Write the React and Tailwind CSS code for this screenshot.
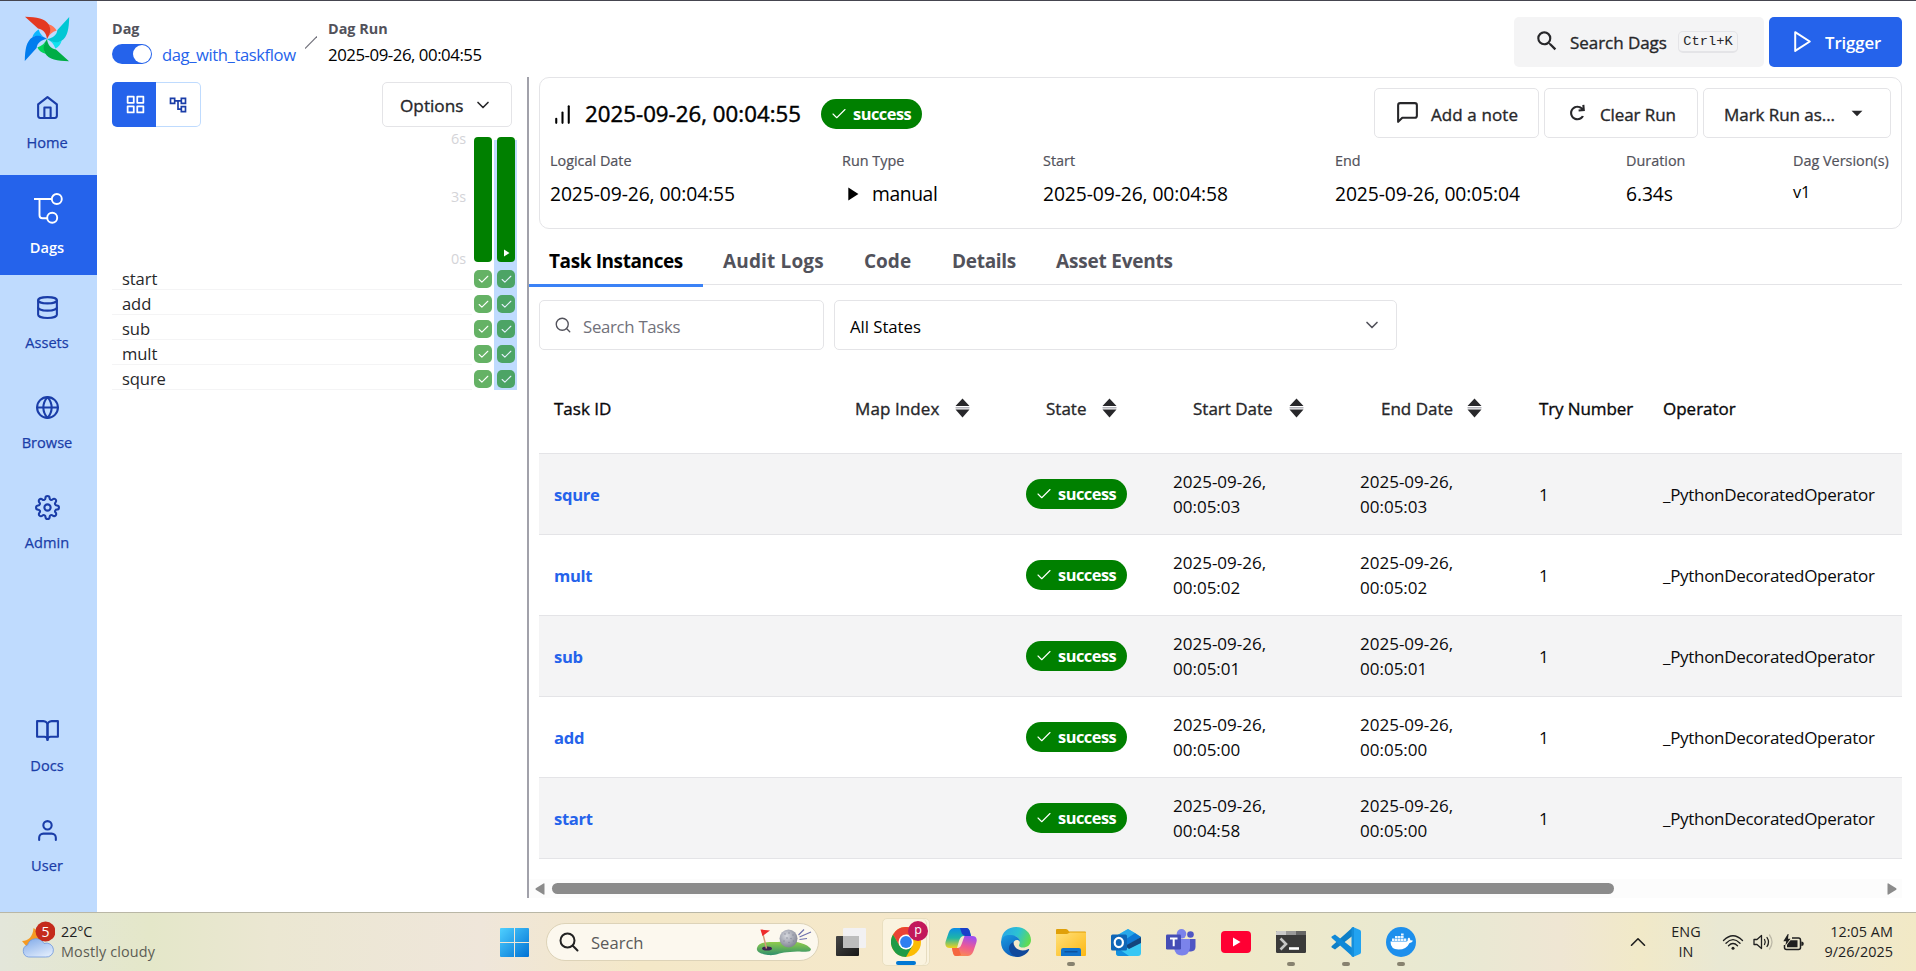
import React from "react";
import {
  FiHome,
  FiDatabase,
  FiGlobe,
  FiSettings,
  FiBookOpen,
  FiUser,
  FiGrid,
  FiChevronDown,
  FiChevronUp,
  FiBarChart,
  FiMessageSquare,
  FiPlay,
  FiSearch,
  FiCheck,
} from "react-icons/fi";
import { MdOutlineAccountTree, MdSearch, MdPlayArrow, MdArrowDropDown } from "react-icons/md";
import { CgRedo } from "react-icons/cg";

const PinwheelLogo = () => (
  <svg width="46" height="46" viewBox="-23 -23 46 46">
    {[
      ["#e43921", "#ff7557", 0],
      ["#00c7d4", "#11e1ee", 90],
      ["#00ad46", "#04d659", 180],
      ["#017cee", "#0cb6ff", 270],
    ].map(([dark, light, deg]) => (
      <g key={deg} transform={`rotate(${deg})`}>
        <path d="M0 0C2.6-4 4.2-9 1.5-14.8C5.5-13.5 8-11.5 9.6-8.4C5-7 2-4 0 0Z" fill={light} />
        <path d="M0 0C-.6-5.5-3.5-9.6-9-10.4L-22-22.2C-10-22-2-20.5 1.8-14.5C5-8.6 2.4-3.8 0 0Z" fill={dark} />
      </g>
    ))}
  </svg>
);

const DagIcon = () => (
  <svg width="32" height="32" viewBox="0 0 32 32" fill="none" stroke="currentColor" strokeWidth="1.9">
    <path d="M3 7H20M8.500 7V23.200a3 3 0 0 0 3 3H16" strokeLinejoin="round" />
    <circle cx="25.800" cy="7" r="5" />
    <circle cx="21.200" cy="25.800" r="5" />
  </svg>
);

const NavItem = ({ icon, label, active }) => (
  <div
    className={
      active
        ? "flex h-[100px] w-full flex-col items-center bg-[#2563eb] pr-[3px] text-[14.6px] font-semibold text-white"
        : "flex h-[100px] w-full flex-col items-center text-[14.6px] font-medium text-[#1a3da8] [-webkit-text-stroke:0.25px]"
    }
  >
    <div className={active ? "mt-[17px] flex h-8 items-center" : "mt-[20px] flex h-[25px] items-center"}>{icon}</div>
    <div className={active ? "mt-[13px] leading-5" : "mt-[12px] leading-5"}>{label}</div>
  </div>
);

const Sidebar = () => (
  <nav className="flex w-[97px] shrink-0 flex-col items-center bg-[#bfdbfe] pr-[3px]">
    <div className="flex h-[74px] shrink-0 items-center pt-0.5">
      <PinwheelLogo />
    </div>
    <NavItem icon={<FiHome size={25} />} label="Home" />
    <div className="-mr-[3px] w-[97px]">
      <NavItem icon={<DagIcon />} label="Dags" active />
    </div>
    <NavItem icon={<FiDatabase size={25} />} label="Assets" />
    <NavItem icon={<FiGlobe size={25} />} label="Browse" />
    <NavItem icon={<FiSettings size={25} />} label="Admin" />
    <div className="h-[123px] shrink-0" />
    <NavItem icon={<FiBookOpen size={25} />} label="Docs" />
    <NavItem icon={<FiUser size={25} />} label="User" />
  </nav>
);

const Header = () => (
  <header className="flex h-[76px] shrink-0 justify-between pl-[15px] pr-[14px]">
    <div className="flex pt-[18px]">
      <div className="w-[193px]">
        <div className="text-[14.4px] font-bold leading-5 text-[#52525b]">Dag</div>
        <div className="mt-[3px] flex h-6 items-center">
          <div className="flex h-5 w-10 items-center justify-end rounded-full bg-[#2563eb] p-px">
            <div className="size-[18px] rounded-full bg-white" />
          </div>
          <span className="ml-[10px] whitespace-nowrap pt-0.5 text-[16.6px] tracking-[-0.4px] text-[#2563eb]">dag_with_taskflow</span>
        </div>
      </div>
      <svg className="mt-[17px]" width="12" height="13" viewBox="0 0 12 13" stroke="#71717a" strokeWidth="1.1">
        <path d="M0 12.500L12 .5" />
      </svg>
      <div className="ml-[11px]">
        <div className="text-[14.4px] font-bold leading-5 text-[#52525b]">Dag Run</div>
        <div className="mt-[3px] h-6 whitespace-nowrap pt-px text-[16.8px] leading-6 tracking-[-0.45px] text-black">2025-09-26, 00:04:55</div>
      </div>
    </div>
    <div className="flex gap-[5px] pt-4">
      <button className="flex h-[50px] w-[250px] items-center rounded-[5px] bg-[#f4f4f5] pl-[20px] text-[#27272a]">
        <MdSearch size={26} className="-mt-0.5" />
        <span className="ml-[10px] w-[108px] whitespace-nowrap pt-px text-left text-[17px] font-medium tracking-[-0.05px] [-webkit-text-stroke:0.35px]">Search Dags</span>
        <kbd className="flex h-[22px] w-[60px] items-center justify-center rounded-[5px] border border-b-2 border-[#e4e4e7] pt-0.5 font-['Liberation_Mono',monospace] text-[13.7px]">
          Ctrl+K
        </kbd>
      </button>
      <button className="flex h-[50px] w-[133px] items-center rounded-[5px] bg-[#2563eb] pl-[21px] text-white">
        <FiPlay size={25} strokeWidth={1.9} className="-mt-0.5" />
        <span className="ml-[10px] pt-0.5 text-[16.8px] font-semibold tracking-[-0.1px]">Trigger</span>
      </button>
    </div>
  </header>
);

const tasks = ["start", "add", "sub", "mult", "squre"];

const CheckSquare = () => (
  <div className="flex size-[18px] items-center justify-center rounded-[5px] bg-[#008000] text-white opacity-60">
    <FiCheck size={13} strokeWidth={2} />
  </div>
);

const GridPanel = () => (
  <section className="flex w-[430px] shrink-0 flex-col pl-[15px]">
    <div className="flex h-[55px] w-[400px] justify-between pt-[5px]">
      <div className="flex h-[45px] w-[89px]">
        <div className="flex w-[44px] items-center justify-center rounded-l-[5px] bg-[#2563eb] pl-0.5 text-white">
          <FiGrid size={21} />
        </div>
        <div className="flex flex-1 items-center justify-center rounded-r-[5px] border border-l-0 border-[#bfdbfe] text-[#1a3da8]">
          <MdOutlineAccountTree size={20} />
        </div>
      </div>
      <button className="flex h-[45px] w-[130px] items-center rounded-[5px] border border-[#e4e4e7] pl-[17px] text-[#27272a]">
        <span className="w-[73px] pt-0.5 text-left text-[17.2px] font-medium [-webkit-text-stroke:0.35px]">Options</span>
        <FiChevronDown size={20} />
      </button>
    </div>
    <div className="flex">
      <div className="w-[360px]">
        <div className="flex h-[133px] flex-col items-end justify-between pr-[6px] text-[14.4px] leading-5 text-[#d4d4d8]">
          <span className="-mt-[3px]">6s</span>
          <span className="pb-[5px]">3s</span>
          <span className="-mb-[4px]">0s</span>
        </div>
        {tasks.map((t) => (
          <div key={t} className="h-[25px] border-b border-[#f4f4f5] pl-[10px] text-[16.6px] leading-[27px] tracking-[-0.1px] text-[#27272a]">
            {t}
          </div>
        ))}
      </div>
      <div className="flex w-[22px] flex-col items-center pt-[5px]">
        <div className="h-[125px] w-[18px] rounded-[4px] bg-[#008000]" />
        <div className="mt-2 flex flex-col gap-[7px]">
          {tasks.map((t) => (
            <CheckSquare key={t} />
          ))}
        </div>
      </div>
      <div className="mt-2 flex h-[250px] w-[23px] flex-col items-start bg-[#bfdbfe] pl-[3px]">
        <div className="-mt-[3px] flex h-[125px] w-[18px] shrink-0 items-end justify-center rounded-[4px] bg-[#008000] pb-[3px] text-white">
          <MdPlayArrow size={12} />
        </div>
        <div className="mt-2 flex flex-col gap-[7px]">
          {tasks.map((t) => (
            <CheckSquare key={t} />
          ))}
        </div>
      </div>
    </div>
  </section>
);

const SuccessBadge = () => (
  <span className="flex h-[30px] w-[101px] items-center rounded-[15px] bg-[#008000] pl-[9px] text-white">
    <FiCheck size={18} strokeWidth={1.5} />
    <span className="ml-[5px] pt-px text-[16.4px] font-bold tracking-[-0.5px]">success</span>
  </span>
);

const OutlineButton = ({ className, children }) => (
  <button className={`flex h-[50px] items-center whitespace-nowrap rounded-[5px] border border-[#e4e4e7] text-[17px] font-medium text-[#27272a] [-webkit-text-stroke:0.35px] ${className}`}>
    {children}
  </button>
);

const Stat = ({ label, width, children }) => (
  <div className={`shrink-0 whitespace-nowrap ${width}`}>
    <div className="text-[14.4px] font-medium leading-5 text-[#52525b] [-webkit-text-stroke:0.2px]">{label}</div>
    <div className="mt-[11px] flex h-6 items-center text-[19.3px] tracking-[-0.1px] text-black">{children}</div>
  </div>
);

const RunCard = () => (
  <div className="ml-[10px] h-[152px] w-[1363px] rounded-[10px] border border-[#e4e4e7] pl-[10px]">
    <div className="flex h-[72px] items-center">
      <FiBarChart size={25} className="text-black" />
      <h1 className="ml-[10px] w-[236px] whitespace-nowrap text-[22.2px] font-medium tracking-[0.05px] text-black [-webkit-text-stroke:0.45px]">
        2025-09-26, 00:04:55
      </h1>
      <SuccessBadge />
      <div className="-mt-0.5 ml-[452px] flex gap-[5px]">
        <OutlineButton className="w-[165px] pl-[20px]">
          <FiMessageSquare size={25} className="-mt-0.5 mr-[10px]" />
          <span className="pl-px pt-[3px] tracking-[0.1px]">Add a note</span>
        </OutlineButton>
        <OutlineButton className="w-[154px] pl-[20px] tracking-[-0.1px]">
          <CgRedo size={25} className="-mt-0.5 mr-[10px]" />
          <span className="pt-[3px]">Clear Run</span>
        </OutlineButton>
        <OutlineButton className="w-[188px] pl-[20px] tracking-[-0.05px]">
          <span className="w-[120px] pt-[3px] text-left">Mark Run as...</span>
          <MdArrowDropDown size={26} />
        </OutlineButton>
      </div>
    </div>
    <div className="flex pt-px">
      <Stat label="Logical Date" width="w-[292px]">2025-09-26, 00:04:55</Stat>
      <Stat label="Run Type" width="w-[201px]">
        <MdPlayArrow size={22} className="-ml-px mr-[9px]" />
        <span className="tracking-[-0.4px]">manual</span>
      </Stat>
      <Stat label="Start" width="w-[292px]">2025-09-26, 00:04:58</Stat>
      <Stat label="End" width="w-[291px]">2025-09-26, 00:05:04</Stat>
      <Stat label="Duration" width="w-[167px]">6.34s</Stat>
      <Stat label="Dag Version(s)" width="w-[98px]">
        <span className="-mt-1 text-[16.4px]">v1</span>
      </Stat>
    </div>
  </div>
);

const Tabs = () => (
  <div className="flex h-[58px] w-[1373px] whitespace-nowrap text-[19px] font-bold text-[#52525b]">
    <div className="w-[174px] border-b-[3px] border-[#3b82f6] pl-[20px] pt-[18px] leading-7 tracking-[-0.4px] text-black">Task Instances</div>
    <div className="mb-[2px] flex flex-1 border-b border-[#e4e4e7] pl-[20px] pt-[18px] leading-7">
      <span className="w-[141px] tracking-[0.15px]">Audit Logs</span>
      <span className="w-[88px]">Code</span>
      <span className="w-[104px] tracking-[-0.3px]">Details</span>
      <span className="tracking-[-0.2px]">Asset Events</span>
    </div>
  </div>
);

const SortIcon = () => (
  <svg width="15" height="20" viewBox="0 0 15 20" className="-mt-0.5 ml-4 shrink-0">
    <path d="M7.500 .5L14.500 8H.5ZM7.500 19.500L14.500 11.600H.5Z" fill="#27272a" />
    <path d="M.5 9.800H14.500" stroke="#a1a1aa" strokeWidth="1.2" />
  </svg>
);

const rows = [
  ["squre", "00:05:03", "00:05:03"],
  ["mult", "00:05:02", "00:05:02"],
  ["sub", "00:05:01", "00:05:01"],
  ["add", "00:05:00", "00:05:00"],
  ["start", "00:04:58", "00:05:00"],
];

const gridCols = "grid grid-cols-[300px_187px_147px_187px_179px_124px_239px] items-center";

const TaskTable = () => (
  <div className="ml-[10px] w-[1363px] overflow-hidden text-[17px] text-[#09090b]">
    <div className={`${gridCols} h-[104px] whitespace-nowrap border-b border-[#e4e4e7] pl-[15px] pt-[15px] font-medium [-webkit-text-stroke:0.35px]`}>
      <span>Task ID</span>
      <span className="flex items-center pl-[1px] text-[#27272a]">
        <span className="w-[84px] tracking-[0.1px]">Map Index</span>
        <SortIcon />
      </span>
      <span className="flex items-center pl-[5px] text-[#27272a]">
        <span className="w-[40px]">State</span>
        <SortIcon />
      </span>
      <span className="flex items-center pl-[5px] text-[#27272a]">
        <span className="w-[80px]">Start Date</span>
        <SortIcon />
      </span>
      <span className="flex items-center pl-[6px] text-[#27272a]">
        <span className="w-[70px]">End Date</span>
        <SortIcon />
      </span>
      <span className="-ml-[15px] tracking-[-0.1px]">Try Number</span>
      <span className="-ml-[15px]">Operator</span>
    </div>
    {rows.map(([name, start, end], i) => (
      <div
        key={name}
        className={
          i % 2 === 0
            ? `${gridCols} h-[81px] border-b border-[#e4e4e7] bg-[#f4f4f5] pl-[15px]`
            : `${gridCols} h-[81px] border-b border-[#e4e4e7] bg-white pl-[15px]`
        }
      >
        <span className="pt-0.5 text-[16.6px] font-bold tracking-[-0.3px] text-[#2563eb]">{name}</span>
        <span />
        <span className="-ml-[15px]">
          <SuccessBadge />
        </span>
        <span className="-ml-[15px] leading-[25px]">
          2025-09-26,
          <br />
          {start}
        </span>
        <span className="-ml-[15px] leading-[25px]">
          2025-09-26,
          <br />
          {end}
        </span>
        <span className="-ml-[15px] pt-px">1</span>
        <span className="-ml-[15px] pt-px tracking-[-0.3px]">_PythonDecoratedOperator</span>
      </div>
    ))}
  </div>
);

const RunPanel = () => (
  <section className="flex w-[1373px] flex-col">
    <RunCard />
    <Tabs />
    <div className="ml-[10px] mt-[13px] flex gap-[10px] text-[16.8px] tracking-[-0.3px]">
      <div className="flex h-[50px] w-[285px] items-center rounded-[5px] border border-[#e4e4e7] pl-[14px] text-[#71717a]">
        <FiSearch size={18} strokeWidth={1.8} className="text-[#52525b]" />
        <span className="ml-[11px] pt-[3px]">Search Tasks</span>
      </div>
      <div className="flex h-[50px] w-[563px] items-center justify-between rounded-[5px] border border-[#e4e4e7] pl-[15px] pr-[14px] text-black">
        <span className="pt-[3px] tracking-[-0.05px]">All States</span>
        <FiChevronDown size={20} className="text-[#52525b]" />
      </div>
    </div>
    <TaskTable />
    <div className="mt-5 flex h-[19px] items-center bg-[#fcfcfc] pl-[6px] pr-[5px]">
      <svg width="10" height="12" viewBox="0 0 10 12" fill="#8b8b8b">
        <path d="M9.500 1V11Q9.500 12 8.500 11.500L.8 6.800Q0 6 .8 5.200L8.500.5Q9.500 0 9.500 1Z" />
      </svg>
      <div className="ml-[7px] h-[11px] w-[1062px] rounded-full bg-[#8b8b8b]" />
      <svg className="ml-auto" width="10" height="12" viewBox="0 0 10 12" fill="#8b8b8b">
        <path d="M.5 1V11Q.5 12 1.500 11.500L9.200 6.800Q10 6 9.200 5.200L1.500.5Q.5 0 .5 1Z" />
      </svg>
    </div>
  </section>
);

const WeatherIcon = () => (
  <svg width="34" height="38" viewBox="0 0 34 38">
    <defs>
      <linearGradient id="cloud" x1="0" y1="0" x2="0.600" y2="1">
        <stop offset="0" stopColor="#7fa9e8" />
        <stop offset="1" stopColor="#dbe8fb" />
      </linearGradient>
    </defs>
    <path d="M1 20C7 20 12 16 12.500 7C18 10 21 16 18 22L6 26Z" fill="#f59a23" />
    <path d="M7.500 36a6.200 6.200 0 0 1-1-12A9 9 0 0 1 23 22.500a7 7 0 1 1 1.500 13.500Z" fill="url(#cloud)" stroke="#6d97dd" strokeWidth=".8" />
    <circle cx="24.500" cy="10.500" r="10" fill="#c42b1c" />
    <text x="24.500" y="15.500" textAnchor="middle" fontSize="14" fill="#fff" fontFamily="Open Sans, sans-serif">5</text>
  </svg>
);

const WindowsIcon = () => (
  <svg width="29" height="29" viewBox="0 0 29 29">
    <defs>
      <linearGradient id="win" x1="0" y1="0" x2="1" y2="1" gradientUnits="objectBoundingBox">
        <stop offset="0" stopColor="#4fd0ff" />
        <stop offset="1" stopColor="#0071d4" />
      </linearGradient>
    </defs>
    <path d="M1 0H14V14H0V1Q0 0 1 0ZM15 0H28Q29 0 29 1V14H15ZM0 15H14V29H1Q0 29 0 28ZM15 15H29V28Q29 29 28 29H15Z" fill="url(#win)" />
  </svg>
);

const GolfIcon = () => (
  <svg width="56" height="28" viewBox="0 0 56 28">
    <defs>
      <linearGradient id="grass" x1="0" y1="0" x2="0" y2="1">
        <stop offset="0" stopColor="#96cf4a" />
        <stop offset="1" stopColor="#2f8f6c" />
      </linearGradient>
      <radialGradient id="ball" cx=".4" cy=".35" r=".7">
        <stop offset="0" stopColor="#d6d8de" />
        <stop offset="1" stopColor="#7d8090" />
      </radialGradient>
    </defs>
    <path d="M1 20C3 13 14 14 22 14C34 12 50 14 55 21C55 26 44 22 34 24C24 24 20 28 12 27C5 26 0 24 1 20Z" fill="url(#grass)" />
    <ellipse cx="11" cy="20.500" rx="5" ry="2" fill="#3a2352" />
    <path d="M6 2L10.500 20.500" stroke="#d49a7a" strokeWidth="1.400" />
    <path d="M4.500 1.500L14 2.500L6.500 8Z" fill="#ee2b2b" />
    <circle cx="32.500" cy="10.500" r="9" fill="url(#ball)" />
    <g fill="#85889a">
      <circle cx="29" cy="6" r=".7" /><circle cx="33" cy="5" r=".7" /><circle cx="37" cy="7" r=".7" />
      <circle cx="31" cy="10" r=".7" /><circle cx="35" cy="10.500" r=".7" /><circle cx="28" cy="13" r=".7" />
      <circle cx="33" cy="14.500" r=".7" /><circle cx="37.500" cy="13" r=".7" />
    </g>
    <path d="M42.500 7L48 1.500M43.500 9L55 4M43.500 11.500L51 10.500" stroke="#6d70ad" strokeWidth="1.200" />
  </svg>
);

const TaskViewIcon = () => (
  <svg width="30" height="28" viewBox="0 0 30 28">
    <defs>
      <linearGradient id="tv" x1="0" y1="0" x2="1" y2="1">
        <stop offset="0" stopColor="#454545" />
        <stop offset="1" stopColor="#181818" />
      </linearGradient>
    </defs>
    <rect x="0" y="8" width="23" height="20" rx="1" fill="url(#tv)" />
    <rect x="7" y="0" width="23" height="20" rx="1" fill="#f1f1f4" fillOpacity=".95" />
    <rect x="7" y="8" width="16" height="12" fill="#bdbdbd" />
  </svg>
);

const ChromeIcon = () => (
  <svg width="30" height="30" viewBox="-15 -15 30 30">
    <circle r="15" fill="#fbbc04" />
    <path d="M-13 -7.500A15 15 0 0 1 13 -7.500H0L-6.500 3.750Z" fill="#ea4335" />
    <path d="M-13 -7.500A15 15 0 0 0 0 15L6.500 3.750L0 7.500L-6.500 3.750Z" fill="#1e9b47" />
    <circle r="7.500" fill="#fff" />
    <circle r="5.900" fill="#2f7ff0" />
  </svg>
);

const CopilotIcon = () => (
  <svg width="32" height="28" viewBox="0 0 32 28">
    <defs>
      <linearGradient id="cpa" x1="0" y1="0" x2="0" y2="1">
        <stop offset="0" stopColor="#0b8ce8" />
        <stop offset=".5" stopColor="#1fb6a6" />
        <stop offset="1" stopColor="#f3d21b" />
      </linearGradient>
      <linearGradient id="cpb" x1=".6" y1="0" x2=".3" y2="1">
        <stop offset="0" stopColor="#a04df0" />
        <stop offset=".5" stopColor="#ee5a94" />
        <stop offset="1" stopColor="#fb8d4f" />
      </linearGradient>
    </defs>
    <path d="M14 0H21C24 0 24.500 2 25.500 6L26 8H19C16 8 15 10 14 13L12 20H5C1 20 -.5 17 .8 13L3.500 5C5 1 7 0 10 0Z" fill="url(#cpa)" />
    <path d="M15 0H21C24 0 24.500 2 26 8H20L17 6Z" fill="#1a3fc9" />
    <path d="M18 28H11C8.500 28 8 25 7 20H12C15 20 16 18 17 15L19.500 8H27C31.500 8 32.500 11 31.200 15L28.500 23C27 27 25 28 22 28Z" fill="url(#cpb)" />
    <path d="M7 20H13.500L16 27L13 28H11C8.500 28 8 25 7 20Z" fill="#f5663f" />
  </svg>
);

const EdgeIcon = () => (
  <svg width="30" height="30" viewBox="0 0 30 30">
    <defs>
      <linearGradient id="edga" x1="0" y1=".2" x2="1" y2=".5">
        <stop offset="0" stopColor="#2aa5e8" />
        <stop offset=".55" stopColor="#2cc3d2" />
        <stop offset="1" stopColor="#62dc4f" />
      </linearGradient>
      <linearGradient id="edgb" x1="0" y1="0" x2=".5" y2="1">
        <stop offset="0" stopColor="#1b9de2" />
        <stop offset="1" stopColor="#0c5dbb" />
      </linearGradient>
    </defs>
    <path d="M.3 13C1 5 7 0 15 0C24 0 30 6 30 13C30 18 26 20.500 22 20.500C19.500 20.500 17.500 19.500 18 18C20 14 18 9 12 9C6 9 1 12 .3 13Z" fill="url(#edga)" />
    <path d="M0 15C.5 9 6 7.500 10 8C16 8.500 19 12 19 15C17 11.500 12 13 12 18C12 24 18 29.500 20 29C11 32 0 26 0 15Z" fill="url(#edgb)" />
    <path d="M12.300 15C10 16 8 18 8 21C8 25 12 30 17 29.900C22 29.500 26 27 28 23C28.400 22 27.800 21.800 27 22.200C21 25 13 23 12.300 15Z" fill="#10489b" />
  </svg>
);

const FolderIcon = () => (
  <svg width="30" height="27" viewBox="0 0 30 27">
    <defs>
      <linearGradient id="fold" x1="0" y1="0" x2="1" y2="1">
        <stop offset="0" stopColor="#ffe07a" />
        <stop offset="1" stopColor="#fdb813" />
      </linearGradient>
    </defs>
    <path d="M0 1Q0 0 1 0H10Q12 0 13 2.500H29Q30 2.500 30 3.500V10H0Z" fill="#e0a008" />
    <path d="M0 5H11L14 3.500H30V26Q30 27 29 27H1Q0 27 0 26Z" fill="url(#fold)" />
    <path d="M5 27V21Q5 19 7 19H23Q25 19 25 21V27Z" fill="#1173cc" />
    <path d="M8.500 22.800H21.500" stroke="#0b4a94" strokeWidth="1.200" />
  </svg>
);

const OutlookIcon = () => (
  <svg width="30" height="27" viewBox="0 0 30 27">
    <path d="M5 7L17 0L30 8V24Q30 27 27 27H8Q5 27 5 24Z" fill="#37c7f4" />
    <path d="M5 7L17 0L24 4L9 14H5Z" fill="#28a8ea" />
    <path d="M24 4L30 8L14 18L9 14Z" fill="#0f78d4" />
    <path d="M30 8V14L18 20L14 17Z" fill="#14447d" />
    <path d="M5 18L18 27H8Q5 27 5 24Z" fill="#1490df" />
    <rect x="0" y="5.500" width="16" height="16" rx="1.500" fill="#0f66b7" />
    <ellipse cx="7.800" cy="13.500" rx="4.100" ry="4.600" fill="none" stroke="#fff" strokeWidth="2.200" />
  </svg>
);

const TeamsIcon = () => (
  <svg width="30" height="27" viewBox="0 0 30 27">
    <circle cx="24.500" cy="5.500" r="3.300" fill="#4f56c4" />
    <path d="M19 10H29.500V18Q29.500 22 25 22.500H19Z" fill="#4f56c4" />
    <circle cx="15.500" cy="4.800" r="4.800" fill="#7b83eb" />
    <path d="M8 10H24V19Q23 26.500 16 26.500Q9 26.500 8 19Z" fill="#7b83eb" />
    <rect x="0" y="5.500" width="15" height="15" rx="1.200" fill="#454db6" />
    <path d="M4 9.500H11.500M7.700 9.500V17.300" stroke="#fff" strokeWidth="2" />
  </svg>
);

const YouTubeIcon = () => (
  <svg width="30" height="22" viewBox="0 0 30 22">
    <rect width="30" height="22" rx="4" fill="#ff0033" />
    <path d="M12 6.500L19.500 11L12 15.500Z" fill="#fff" />
  </svg>
);

const TerminalIcon = () => (
  <svg width="30" height="22" viewBox="0 0 30 22">
    <rect width="30" height="22" rx="1.200" fill="#3a3a3a" />
    <path d="M0 4V1Q0 0 1 0H10V4Z" fill="#c9c9c9" />
    <path d="M10 0H20V4H10Z" fill="#999" />
    <path d="M20 0H29Q30 0 30 1V4H20Z" fill="#666" />
    <path d="M4.500 7.500L10 13L4.500 18.500" stroke="#c6c6c6" strokeWidth="2.600" fill="none" />
    <path d="M13 17.500H23" stroke="#fff" strokeWidth="2.600" />
  </svg>
);

const VSCodeIcon = () => (
  <svg width="30" height="30" viewBox="0 0 30 30">
    <path d="M22 0L29 3Q30 3.500 30 5V25Q30 26.500 29 27L22 30Z" fill="#22a3f1" />
    <path d="M22 0V8.500L4 22.500L.7 20.500Q0 19.700 .8 19Z" fill="#0e7fc7" />
    <path d="M22 30V21.500L4 7.500L.7 9.500Q0 10.300 .8 11Z" fill="#1089d8" />
    <path d="M20.500 .8L23 0V30L20.500 29.200Z" fill="#158fdc" />
  </svg>
);

const DockerIcon = () => (
  <svg width="30" height="30" viewBox="0 0 30 30">
    <circle cx="15" cy="15" r="15" fill="#1d8fec" />
    <path d="M4.500 14.500H20.500Q22 14.200 21.800 11.500L23 10.500Q24.500 11.800 24.300 13.300Q26 13 27 13.800Q26 16 23.500 15.900Q20.500 22.500 12.500 22.500Q4.500 22.500 4.500 14.500Z" fill="#fff" />
    <path d="M6 11.400h2.600V14H6ZM9 11.400h2.600V14H9ZM12 11.400h2.600V14H12ZM15 11.400h2.600V14H15ZM18 11.400h2.300V14H18ZM9 8.900h2.600V11H9ZM12 8.900h2.600V11H12ZM15 8.900h2.600V11H15ZM15 6.500h2.600V8.500H15Z" fill="#eaf5ff" />
  </svg>
);

const apps = [
  { id: "copilot", icon: <CopilotIcon />, open: false },
  { id: "edge", icon: <EdgeIcon />, open: false },
  { id: "files", icon: <FolderIcon />, open: true },
  { id: "outlook", icon: <OutlookIcon />, open: false },
  { id: "teams", icon: <TeamsIcon />, open: false },
  { id: "youtube", icon: <YouTubeIcon />, open: false },
  { id: "terminal", icon: <TerminalIcon />, open: true },
  { id: "vscode", icon: <VSCodeIcon />, open: true },
  { id: "docker", icon: <DockerIcon />, open: true },
];

const WifiIcon = () => (
  <svg width="22" height="17" viewBox="0 0 22 17" fill="none" stroke="#1f1f1f" strokeWidth="1.300" strokeLinecap="round">
    <path d="M1.500 6.500Q11-3 20.500 6.500M4 9.200Q11 2.200 18 9.200M6.500 11.800Q11 7.200 15.500 11.800" />
    <circle cx="11" cy="14.300" r="1.500" fill="#1f1f1f" stroke="none" />
  </svg>
);

const SpeakerIcon = () => (
  <svg width="21" height="16" viewBox="0 0 21 16" fill="none" stroke="#1f1f1f" strokeWidth="1.300" strokeLinecap="round" strokeLinejoin="round">
    <path d="M1 5.500H4L8.500 1.500V14.500L4 10.500H1Z" />
    <path d="M11.500 5.500Q13 8 11.500 10.500M14 3.500Q17 8 14 12.500" />
    <path d="M16.500 1Q21.500 8 16.500 15" stroke="#bdb9a8" />
  </svg>
);

const BatteryIcon = () => (
  <svg width="21" height="17" viewBox="0 0 21 17">
    <path d="M9 4H15.500Q17.500 4 17.500 6.200V13.600Q17.500 15.600 15.500 15.600H3.500Q1.500 15.600 1.500 13.600V11" fill="none" stroke="#1f1f1f" strokeWidth="1.500" />
    <path d="M18.300 7.500Q20.800 7.500 20.800 9.800T18.300 12.100Z" fill="#1f1f1f" />
    <path d="M4 13.300V10.500L7.500 6.300H14.500V13.300Z" fill="#1f1f1f" />
    <path d="M4.800 0L.3 7.200H3.200L2.400 11.500L7.500 4.800H5L5.600 0Z" fill="#1f1f1f" />
  </svg>
);

const Taskbar = () => (
  <footer className="flex h-[59px] shrink-0 items-center border-t border-[#b9b7a6] bg-[linear-gradient(90deg,#e3e6da_0px,#e4e7c9_150px,#ebe7d2_270px,#efe6da_480px,#f4e8c8_640px,#f5e8cb_1000px,#efe9c8_1230px,#e8e9d3_1450px,#efe6d3_1560px,#f1e9c8_1640px,#e9e8d3_1720px,#eee8cf_1810px,#f2e9c6_1916px)] text-[14.4px] text-[#1f1f1f]">
    <div className="flex w-[500px] items-center pl-[21px]">
      <div className="-mt-[4px]">
        <WeatherIcon />
      </div>
      <div className="-mt-px ml-[6px] leading-[20px]">
        <div className="tracking-[-0.1px]">22°C</div>
        <div className="tracking-[0.15px] text-[#5c5c54]">Mostly cloudy</div>
      </div>
    </div>
    <WindowsIcon />
    <div className="ml-[17px] flex h-[38px] w-[273px] items-center rounded-full border border-[#ddd3b8] bg-[#fcf8ee] pl-[12px]">
      <svg width="20" height="20" viewBox="0 0 20 20" fill="none" stroke="#222" strokeWidth="2" strokeLinecap="round">
        <circle cx="8.500" cy="8.500" r="7" />
        <path d="M13.800 13.800L18.500 18.500" />
      </svg>
      <span className="ml-[12px] pt-0.5 text-[16.6px] text-[#5a5a5a]">Search</span>
      <div className="ml-auto pr-[6px]">
        <GolfIcon />
      </div>
    </div>
    <div className="ml-[17px]">
      <TaskViewIcon />
    </div>
    <div className="ml-[16px] flex h-[48px] w-[48px] rounded-[5px] border border-[#e9dfc0] bg-[#faf3df]">
      <div className="relative flex w-[44px] items-center justify-center rounded-[5px] border-r border-[#e6dcc0] pl-[3px]">
        <ChromeIcon />
        <span className="absolute left-[25px] top-[2px] flex size-5 items-center justify-center rounded-full bg-[#c2185b] pb-0.5 text-[12.500px] leading-none text-white">p</span>
        <span className="absolute bottom-0 left-[13px] h-1 w-5 rounded-full bg-[#0078d4]" />
      </div>
    </div>
    <div className="ml-[3px] flex">
      {apps.map((a) => (
        <div key={a.id} className="relative flex h-[58px] w-[55px] items-center justify-center">
          {a.icon}
          {a.open && <span className="absolute bottom-[5px] left-[23.500px] h-1 w-2 rounded-full bg-[#87826f]" />}
        </div>
      ))}
    </div>
    <div className="ml-auto flex items-center pr-[23px]">
      <FiChevronUp size={26} strokeWidth={1.5} />
      <div className="ml-[10px] w-[50px] text-center leading-5">
        ENG
        <br />
        IN
      </div>
      <div className="ml-[11px] flex items-center gap-[9px]">
        <WifiIcon />
        <SpeakerIcon />
        <BatteryIcon />
      </div>
      <div className="w-[89px] whitespace-nowrap text-right leading-5 tracking-[0.05px]">
        12:05 AM
        <br />
        9/26/2025
      </div>
    </div>
  </footer>
);

export default function App() {
  return (
    <div className="flex h-[971px] w-[1916px] flex-col overflow-hidden border-t border-[#45454f] bg-white font-['Open_Sans','Noto_Sans',sans-serif] text-[#18181b]">
      <div className="flex h-[911px] shrink-0">
        <Sidebar />
        <main className="flex flex-1 flex-col">
          <Header />
          <div className="flex h-[821px]">
            <GridPanel />
            <div className="w-[2px] shrink-0 bg-[#a1a1aa]" />
            <RunPanel />
          </div>
        </main>
      </div>
      <Taskbar />
    </div>
  );
}
